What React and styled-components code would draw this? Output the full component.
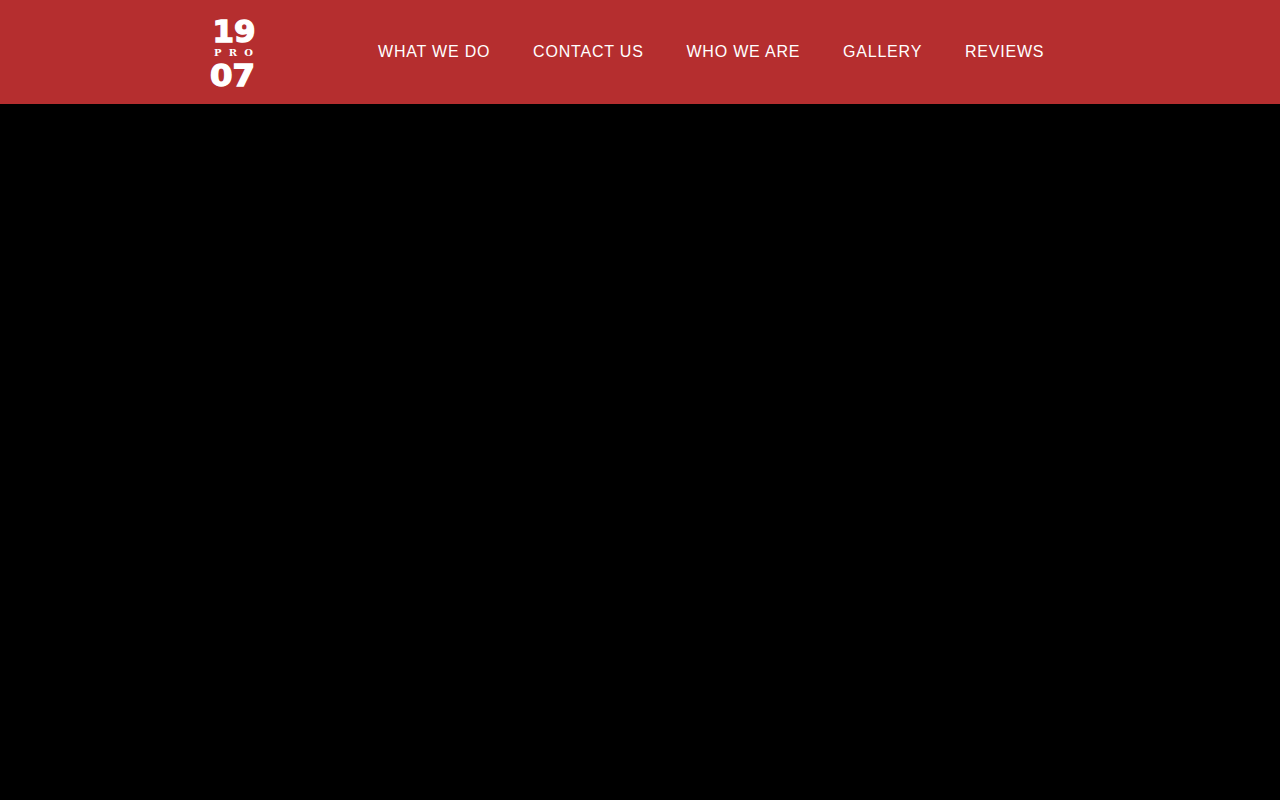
import React from 'react'
import styled, { createGlobalStyle } from 'styled-components'

const GlobalStyle = createGlobalStyle`
  html, body {
    margin: 0;
    padding: 0;
    height: 100%;
    background: #000000;
  }
`;

const Header = styled.header`
  display: flex;
  align-items: center;
  height: 104px;
  padding-left: 209px;
  background: #b52e2f;
`;

const Logo = styled.svg`
  display: block;
  flex: none;
  width: 48px;
  height: 104px;
  margin-right: 121px;
  fill: #ffffff;
  font-weight: 700;
`;

const LogoYear = styled.text`
  font-family: "DejaVu Sans", sans-serif;
  font-size: 31px;
  stroke: #ffffff;
  stroke-width: 1.4px;
`;

const LogoPro = styled.text`
  font-family: "DejaVu Serif", serif;
  font-size: 10px;
`;

const Nav = styled.nav`
  display: flex;
  gap: 42.8px;
`;

const NavLink = styled.a`
  color: #ffffff;
  font-family: "Liberation Sans", Arial, sans-serif;
  font-size: 16px;
  letter-spacing: 0.8px;
  line-height: 20px;
  text-transform: uppercase;
`;

const links = ['What we do', 'Contact us', 'Who we are', 'Gallery', 'Reviews'];

export default function App() {
  return (
    <>
      <GlobalStyle />
      <Header>
        <Logo viewBox="0 0 48 104">
          <LogoYear x="3.5" y="41.5" textLength="43" lengthAdjust="spacingAndGlyphs">19</LogoYear>
          <LogoPro x="5" y="56" textLength="39">PRO</LogoPro>
          <LogoYear x="1" y="85.5" textLength="45" lengthAdjust="spacingAndGlyphs">07</LogoYear>
        </Logo>
        <Nav>
          {links.map((l) => (
            <NavLink key={l}>{l}</NavLink>
          ))}
        </Nav>
      </Header>
    </>
  )
}
